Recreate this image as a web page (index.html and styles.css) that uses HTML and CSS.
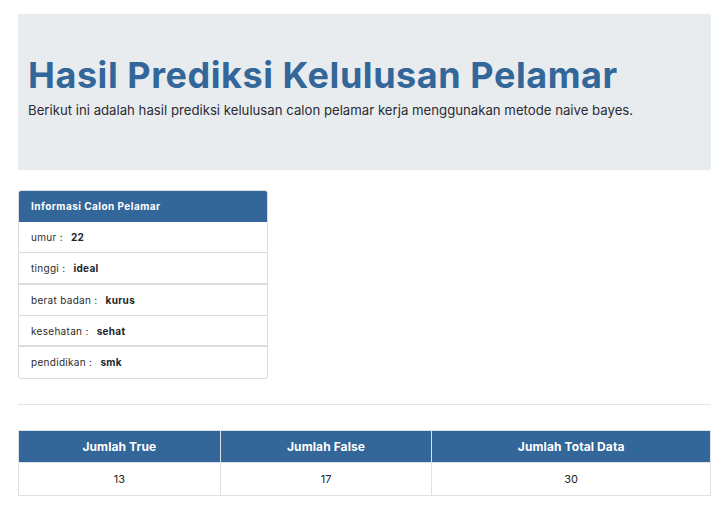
FILE: index.html
```html
<!DOCTYPE html>
<html lang="id">
<head>
<meta charset="utf-8">
<title>Hasil Prediksi Kelulusan Pelamar</title>
<link rel="stylesheet" href="styles.css">
</head>
<body>
<div class="page">
  <section class="jumbotron">
    <h1 class="title">Hasil Prediksi Kelulusan Pelamar</h1>
    <p class="lead">Berikut ini adalah hasil prediksi kelulusan calon pelamar kerja menggunakan metode naive bayes.</p>
  </section>

  <div class="card">
    <div class="card-header">Informasi Calon Pelamar</div>
    <ul class="list">
      <li class="item">umur : <b>22</b></li>
      <li class="item thick">tinggi : <b>ideal</b></li>
      <li class="item">berat badan : <b>kurus</b></li>
      <li class="item thick">kesehatan : <b>sehat</b></li>
      <li class="item last">pendidikan : <b>smk</b></li>
    </ul>
  </div>

  <hr class="divider">

  <table class="summary">
    <thead>
      <tr>
        <th class="c1">Jumlah True</th>
        <th class="c2">Jumlah False</th>
        <th class="c3">Jumlah Total Data</th>
      </tr>
    </thead>
    <tbody>
      <tr>
        <td>13</td>
        <td>17</td>
        <td>30</td>
      </tr>
    </tbody>
  </table>
</div>
</body>
</html>
```

FILE: styles.css
```css
* { box-sizing: border-box; }
html, body { margin: 0; padding: 0; background: #fff; }
body {
  font-family: "Inter", "Noto Sans", sans-serif;
  color: #212529;
}
.page {
  padding: 14px 10px 0 18px;
}
.jumbotron {
  background: #e9ecef;
  height: 156px;
  padding: 39px 10px 0 10px;
}
.title {
  margin: 0;
  font-size: 36px;
  line-height: 44px;
  font-weight: 700;
  color: #336699;
  letter-spacing: 0.55px;
}
.lead {
  margin: 3px 0 0 0;
  font-size: 13.2px;
  line-height: 20px;
  color: #2b2b33;
}
.card {
  margin-top: 20px;
  width: 250px;
  border: 1px solid #dcdcdc;
  border-radius: 3px;
  overflow: hidden;
}
.card-header {
  background: #336699;
  color: #fff;
  font-size: 10px;
  font-weight: 700;
  letter-spacing: 0.45px;
  height: 31px;
  line-height: 31px;
  padding-left: 12px;
}
.list { list-style: none; margin: 0; padding: 0; }
.item {
  height: 31.3px;
  line-height: 30px;
  padding-left: 12px;
  font-size: 10px;
  letter-spacing: 0.3px;
  color: #2a2a2a;
  border-bottom: 1px solid #dcdcdc;
}
.item.thick { border-bottom: 2px solid #dcdcdc; }
.item.last { border-bottom: 0; }
.item b { font-weight: 700; color: #212529; margin-left: 5px; }
.divider {
  margin: 25px 0 25px 0;
  border: 0;
  border-top: 1px solid #e3e3e3;
}
.summary {
  width: 693px;
  border-collapse: collapse;
  font-size: 11px;
}
.summary th {
  background: #336699;
  color: #fff;
  font-weight: 700;
  font-size: 12px;
  letter-spacing: 0.1px;
  height: 32px;
  border: 1px solid #dee2e6;
  text-align: center;
  padding: 0;
}
.summary td {
  height: 33px;
  border: 1px solid #dee2e6;
  text-align: center;
  padding: 0;
  color: #212529;
}
.c1 { width: 202px; }
.c2 { width: 212px; }
.c3 { width: 279px; }
```
